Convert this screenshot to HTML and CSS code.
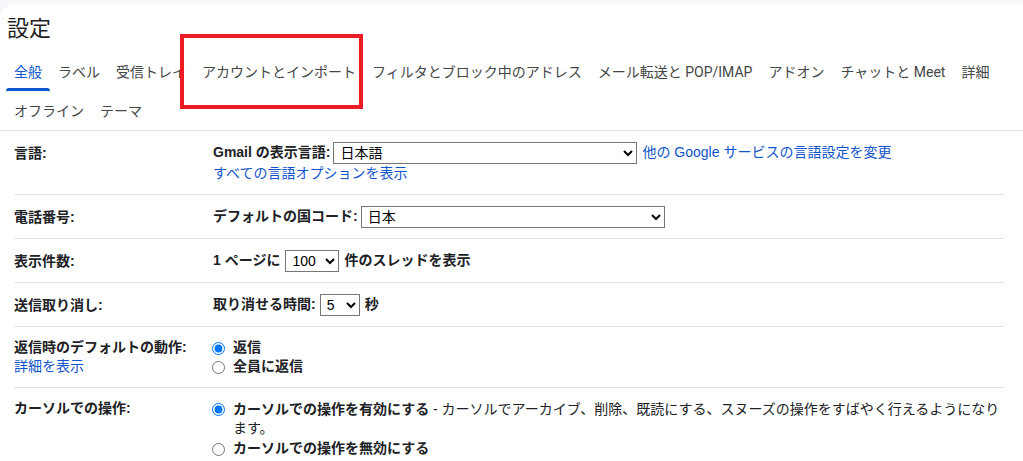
FILE: index.html
```html
<!DOCTYPE html>
<html lang="ja">
<head>
<meta charset="utf-8">
<title>設定</title>
<link rel="stylesheet" href="styles.css">
</head>
<body>
<div class="card">
  <h1 class="title">設定</h1>
  <nav class="tabs">
    <a class="tab active">全般</a>
    <a class="tab">ラベル</a>
    <a class="tab">受信トレイ</a>
    <a class="tab">アカウントとインポート</a>
    <a class="tab">フィルタとブロック中のアドレス</a>
    <a class="tab">メール転送と POP/IMAP</a>
    <a class="tab">アドオン</a>
    <a class="tab">チャットと Meet</a>
    <a class="tab">詳細</a>
    <a class="tab">オフライン</a>
    <a class="tab">テーマ</a>
  </nav>
  <div class="settings">
    <div class="row">
      <div class="label ctl">言語:</div>
      <div class="value">
        <div class="ctl-line"><b>Gmail の表示言語:</b><select class="sel sel-lang"><option>日本語</option></select><a class="link">他の Google サービスの言語設定を変更</a></div>
        <div class="text-line"><a class="link">すべての言語オプションを表示</a></div>
      </div>
    </div>
    <div class="row">
      <div class="label ctl">電話番号:</div>
      <div class="value">
        <div class="ctl-line"><b>デフォルトの国コード:</b><select class="sel sel-country"><option>日本</option></select></div>
      </div>
    </div>
    <div class="row">
      <div class="label ctl">表示件数:</div>
      <div class="value">
        <div class="ctl-line"><b>1 ページに</b><select class="sel sel-count"><option>100</option></select><b>件のスレッドを表示</b></div>
      </div>
    </div>
    <div class="row">
      <div class="label ctl">送信取り消し:</div>
      <div class="value">
        <div class="ctl-line"><b>取り消せる時間:</b><select class="sel sel-undo"><option>5</option></select><b>秒</b></div>
      </div>
    </div>
    <div class="row">
      <div class="label">返信時のデフォルトの動作:<br><a class="link normal">詳細を表示</a></div>
      <div class="value">
        <label class="opt"><input type="radio" name="reply" checked><span><b>返信</b></span></label>
        <label class="opt"><input type="radio" name="reply"><span><b>全員に返信</b></span></label>
      </div>
    </div>
    <div class="row">
      <div class="label">カーソルでの操作:</div>
      <div class="value">
        <label class="opt"><input type="radio" name="hover" checked><span class="desc"><b>カーソルでの操作を有効にする</b> - カーソルでアーカイブ、削除、既読にする、スヌーズの操作をすばやく行えるようになります。</span></label>
        <label class="opt"><input type="radio" name="hover"><span><b>カーソルでの操作を無効にする</b></span></label>
      </div>
    </div>
  </div>
</div>
<div class="annotation"></div>
</body>
</html>
```

FILE: styles.css
```css
* {
  box-sizing: border-box;
}

html {
  overflow: hidden;
}

body {
  margin: 0;
  background: #f6f8fc;
  font-family: "Liberation Sans", "Noto Sans CJK JP", sans-serif;
  font-size: 14px;
  color: #202124;
}

.card {
  margin-top: 4px;
  background: #fff;
  border-top-left-radius: 16px;
  min-height: 470px;
}

.title {
  margin: 0;
  height: 48px;
  line-height: 44px;
  padding-left: 7px;
  font-size: 22px;
  font-weight: 400;
  color: #1f1f1f;
  font-family: "Noto Sans CJK JP", sans-serif;
}

.tabs {
  display: flex;
  flex-wrap: wrap;
  padding-left: 6px;
  border-bottom: 1px solid #e3e3e3;
}

.tab {
  position: relative;
  padding: 0 8px;
  height: 39px;
  line-height: 40px;
  font-family: Roboto, "Noto Sans CJK JP", sans-serif;
  color: #444746;
  white-space: nowrap;
  text-decoration: none;
}

.tab.active {
  color: #0b57d0;
}

.tab.active::after {
  content: "";
  position: absolute;
  left: 0;
  right: 0;
  bottom: 0;
  height: 3px;
  background: #0b57d0;
  border-radius: 3px 3px 0 0;
}

.settings {
  padding: 0 19px 0 14px;
}

.row {
  display: grid;
  grid-template-columns: 199px 1fr;
  padding: 11px 0 10px;
  border-bottom: 1px solid #e3e3e3;
  line-height: 19.5px;
}

.label {
  font-weight: 700;
}

.label.ctl {
  line-height: 22px;
}

.ctl-line {
  display: flex;
  align-items: center;
  height: 22px;
  white-space: nowrap;
}

.sel {
  height: 22px;
  margin: 0 5px 0 3px;
  padding: 0 0 0 2px;
  font: 14px "Liberation Sans", "Noto Sans CJK JP", sans-serif;
  color: #000;
  background: #fff;
}

.sel-lang,
.sel-country {
  width: 304px;
}

.sel-count {
  width: 54px;
  margin-left: 5px;
}

.sel-undo {
  width: 40px;
  margin-left: 4px;
}

.link {
  color: #1155cc;
  text-decoration: none;
  font-weight: 400;
  cursor: pointer;
}

.text-line {
  line-height: 19.5px;
}

.opt {
  display: flex;
  align-items: flex-start;
  gap: 8px;
}

.opt input {
  flex: none;
  width: 13px;
  height: 13px;
  margin: 4px 0 0 -1px;
}

.desc {
  padding-top: 1px;
}

.annotation {
  position: absolute;
  left: 180px;
  top: 34px;
  width: 183px;
  height: 75px;
  border: 4px solid #ed1c24;
}
```
